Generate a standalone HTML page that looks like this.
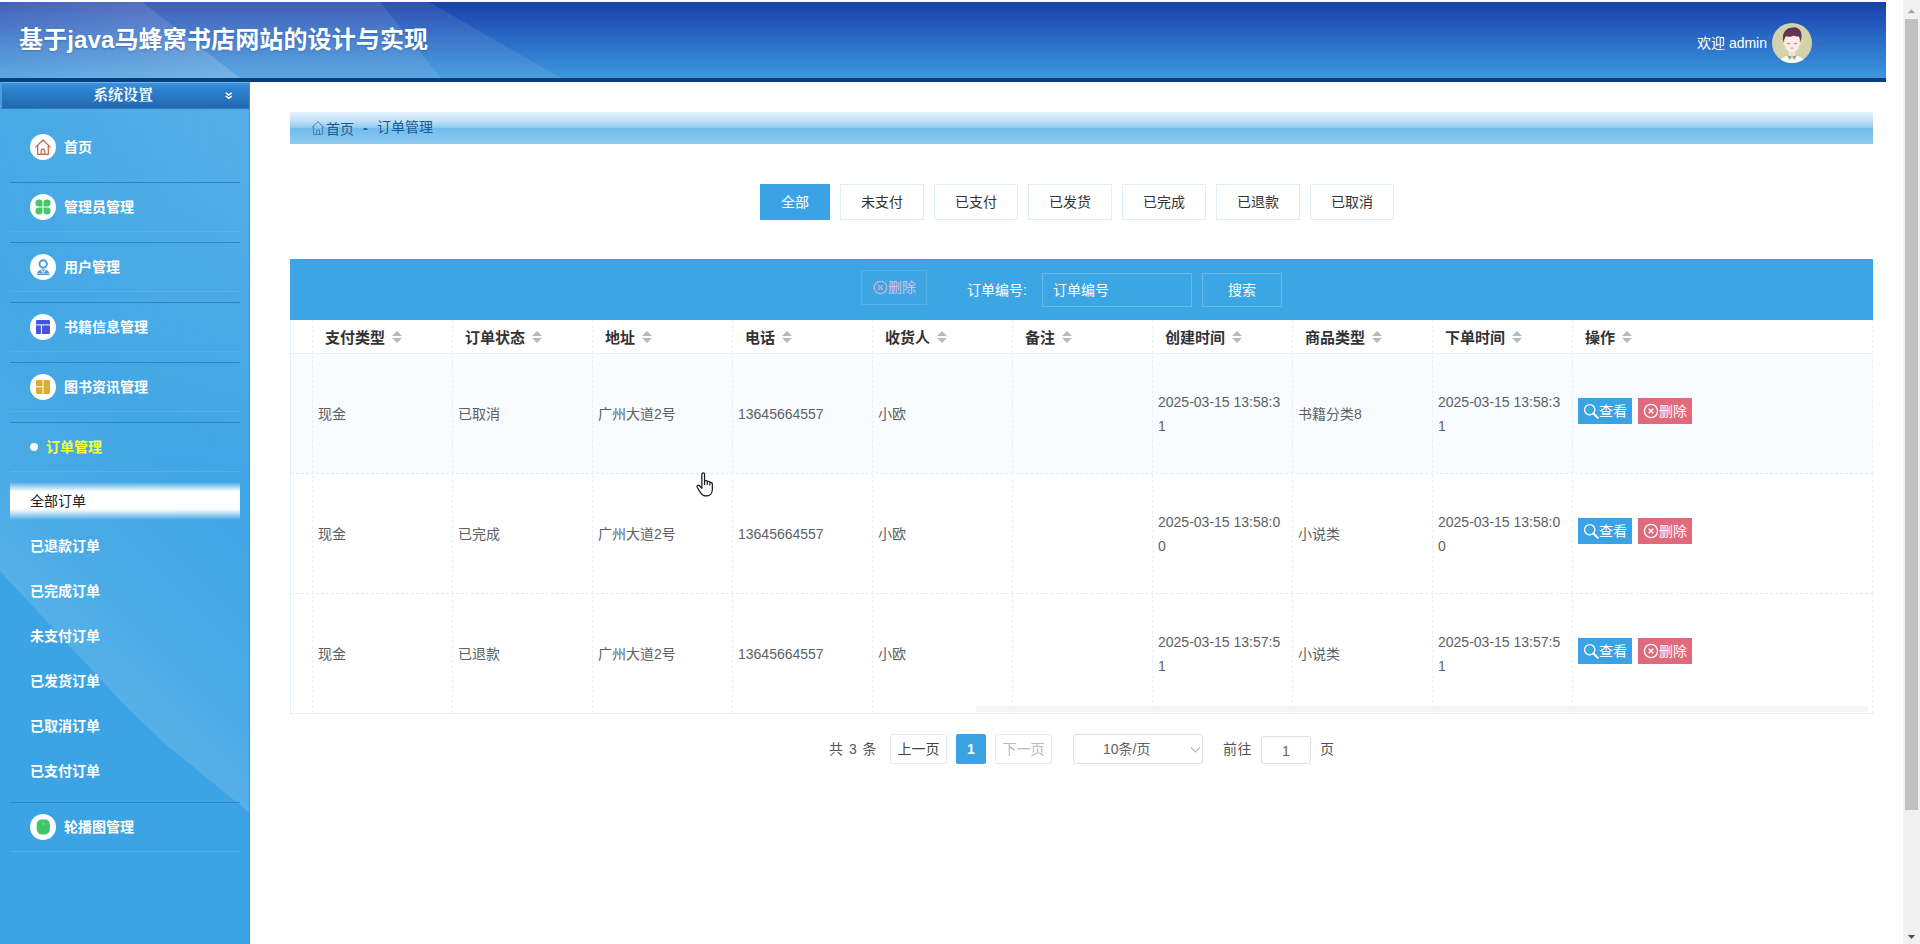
<!DOCTYPE html>
<html lang="zh-CN">
<head>
<meta charset="utf-8">
<title>基于java马蜂窝书店网站的设计与实现</title>
<style>
*{box-sizing:border-box;margin:0;padding:0}
html,body{width:1920px;height:944px;overflow:hidden;background:#fff}
body{position:relative;font-family:"Liberation Sans","Noto Sans CJK SC",sans-serif;font-size:14px;color:#333}
.abs{position:absolute}
/* ---------- header ---------- */
#header{position:absolute;left:0;top:2px;width:1886px;height:80px;border-bottom:4px solid #063f7f;overflow:hidden;
 background:linear-gradient(to bottom,#1b3fab 0%,#2a6cc6 50%,#3a97dc 100%)}
#header .beam{position:absolute;left:0;top:0;width:760px;height:76px}
#title{position:absolute;left:19px;top:21px;font-size:24px;font-weight:bold;color:#fff;line-height:34px;white-space:nowrap;letter-spacing:0.13px;text-shadow:0 1px 2px rgba(20,60,140,.35)}
#welcome{position:absolute;left:1697px;top:32px;font-size:14px;color:#fff;line-height:18px;white-space:nowrap}
#avatar{position:absolute;left:1772px;top:21px;width:40px;height:40px}
/* ---------- sidebar ---------- */
#side{position:absolute;left:0;top:82px;width:250px;height:862px;background:#3ca4e4;overflow:hidden;border-right:1px solid #3b94d2}
#side .beams{position:absolute;left:0;top:0;width:250px;height:863px}
#sys{position:absolute;left:0;top:0;width:250px;height:27px;background:linear-gradient(to bottom,#3a93d8 0%,#2b7fca 35%,#2267b1 100%);border-top:1px solid #6fb9ec;border-left:2px solid #4c9ddb;border-bottom:1px solid #2a78be;color:#fff;font-weight:bold;font-size:15px;line-height:25px;text-align:center;padding-right:6px;font-family:"Liberation Serif","Noto Serif CJK SC",serif}
.mi{position:absolute;left:10px;width:230px;height:60px;border-bottom:1px solid #2b86c9}
.mi.nb:before{display:none}
.mi:before{content:"";position:absolute;left:0;right:0;bottom:10px;height:1px;background:rgba(255,255,255,.09)}
.mi .ic{position:absolute;left:20px;top:11px;width:26px;height:26px;border-radius:50%;background:#fff}
.mi .ic svg{position:absolute;left:0;top:0;width:26px;height:26px}
.mi .tx{position:absolute;left:54px;top:13px;line-height:22px;font-size:14px;font-weight:bold;color:#fff;white-space:nowrap}
.sub{position:absolute;left:10px;width:230px;height:45px;line-height:45px;padding-left:20px;font-size:14px;font-weight:bold;color:#fff;white-space:nowrap}
/* ---------- main ---------- */
#crumb{position:absolute;left:290px;top:112px;width:1583px;height:32px;background:linear-gradient(to bottom,#e6f3fc 0%,#c6e3f8 25%,#94ccf2 48%,#74bcec 51%,#7cc1ee 70%,#8ecbf0 100%);color:#1b5a94;font-size:14px;line-height:32px;white-space:nowrap}
.tab{position:absolute;top:184px;height:36px;line-height:34px;border:1px solid #e0eef6;text-align:center;font-size:14px;color:#333;background:#fff}
.tab.on{background:#3ba3e3;border-color:#3ba3e3;color:#fff}
#tool{position:absolute;left:290px;top:259px;width:1583px;height:61px;background:#3ca5e4}
#tbl{position:absolute;left:290px;top:320px;width:1583px;height:394px;border-left:1px solid #e3eff6;border-bottom:1px solid #e9eff3}
.vl{position:absolute;top:0;width:0;height:393px;border-left:1px dashed #e9f0f5}
.hl{position:absolute;left:0;width:1582px;height:0;border-top:1px dashed #e2ebf1}
.th{position:absolute;top:0;height:33px;line-height:35px;font-weight:bold;font-size:15px;color:#333;white-space:nowrap}
.th i{display:inline-block;position:relative;width:10px;height:14px;margin-left:7px;vertical-align:-1px}
.th i:before,.th i:after{content:"";position:absolute;left:0;border:5px solid transparent}
.th i:before{top:-4px;border-bottom-color:#b5b9c1}
.th i:after{top:8px;border-top-color:#b5b9c1}
.td{position:absolute;font-size:14px;color:#5c5f64;line-height:24px;white-space:nowrap}
.btn{position:absolute;width:54px;height:26px;color:#fff;font-size:14px;line-height:26px;white-space:nowrap}
.btn.v{background:#3ba3e3}
.btn.d{background:#e0697b}
.btn svg{position:absolute;left:5px;top:5px;width:16px;height:16px}
.btn span{position:absolute;left:21px;top:0}
.pg{position:absolute;top:734px;height:30px;line-height:28px;font-size:14px;color:#555;white-space:nowrap}
.pg.b{border:1px solid #e6edf2;background:#fff;text-align:center;border-radius:2px}
</style>
</head>
<body>

<!-- HEADER -->
<div id="header">
  <svg class="beam" viewBox="0 0 760 76" preserveAspectRatio="none">
    <defs>
      <linearGradient id="hbA" x1="0" y1="0" x2="1" y2="0"><stop offset="0" stop-color="#fff" stop-opacity=".015"/><stop offset="1" stop-color="#fff" stop-opacity=".16"/></linearGradient>
    </defs>
    <polygon points="0,0 429,0 561,76 0,76" fill="#fff" fill-opacity=".085"/>
    <polygon points="0,0 380,0 441,76 0,76" fill="#fff" fill-opacity=".09"/>
    <polygon points="0,0 142,0 240,76 0,76" fill="url(#hbA)"/>
  </svg>
  <div id="title">基于java马蜂窝书店网站的设计与实现</div>
  <div id="welcome">欢迎 admin</div>
  <svg class="abs" style="left:1815px;top:38px;width:10px;height:7px" viewBox="0 0 10 7"><path d="M1 1.500l4 3.500 4-3.500" fill="none" stroke="#50648c" stroke-width="1.400" opacity=".5"/></svg>
  <svg id="avatar" viewBox="0 0 40 40">
    <defs><clipPath id="avc"><circle cx="20" cy="20" r="20"/></clipPath></defs>
    <circle cx="20" cy="20" r="20" fill="#d3d3ab"/>
    <g clip-path="url(#avc)">
      <path d="M7.500 40c.6-5 5.200-7.400 12.500-7.400S31.900 35 32.500 40z" fill="#fdfdfb"/>
      <path d="M16.800 28h6.400v4.600l-3.200 3.600-3.200-3.600z" fill="#f7ddd3"/>
      <path d="M15 32.200l2.300 4.300 2.700-2.800zM25 32.200l-2.300 4.300-2.700-2.800z" fill="#7aab70"/>
      <ellipse cx="12.600" cy="21" rx="1.300" ry="1.900" fill="#f7ddd3"/><ellipse cx="27.400" cy="21" rx="1.300" ry="1.900" fill="#f7ddd3"/>
      <path d="M12.700 17c0-6 3.200-8.500 7.300-8.500s7.300 2.500 7.300 8.500v4c0 4.600-3.300 8.300-7.300 8.300s-7.300-3.700-7.300-8.300z" fill="#fcebe4"/>
      <path d="M11.600 19.500C9.300 11.500 13 5 19.500 4.800c2-1 5.500-.6 7.300 1.200 3.400 2.400 3.300 8.400 1.700 13.200-.3-2.700-.8-4.400-1.700-5.800-1.700.4-3.600.2-5-.9-2.200 1.400-5.400 1.600-7.800.8-1.400 1.500-2 3.600-2.400 6.200z" fill="#623650"/>
      <path d="M15 20.400q1.400.9 2.800 0M22.200 20.400q1.400.9 2.800 0" fill="none" stroke="#6a4a55" stroke-width=".7"/>
      <path d="M18.600 24.900q1.400.9 2.800 0" fill="none" stroke="#d9737a" stroke-width=".8"/>
    </g>
  </svg>
</div>

<!-- SIDEBAR -->
<div id="side">
  <svg class="beams" viewBox="0 0 250 863" preserveAspectRatio="none">
    <defs>
      <linearGradient id="sb1" gradientUnits="userSpaceOnUse" x1="60" y1="549" x2="210" y2="399"><stop offset="0" stop-color="#fff" stop-opacity=".13"/><stop offset=".35" stop-color="#fff" stop-opacity=".07"/><stop offset="1" stop-color="#fff" stop-opacity=".02"/></linearGradient>
      <linearGradient id="sb2" x1="0" y1="0" x2="1" y2="0"><stop offset="0" stop-color="#fff" stop-opacity=".05"/><stop offset="1" stop-color="#fff" stop-opacity=".12"/></linearGradient>
      <linearGradient id="sb3" x1="0" y1="0" x2="0" y2="1"><stop offset="0" stop-color="#fff" stop-opacity="1"/><stop offset="1" stop-color="#fff" stop-opacity="0"/></linearGradient>
      <mask id="sbm"><rect x="0" y="0" width="250" height="420" fill="url(#sb3)"/></mask>
    </defs>
    <polygon points="0,0 250,0 250,731 164,661 121,619 0,489" fill="url(#sb1)"/>
    <rect x="0" y="0" width="250" height="420" fill="url(#sb2)" mask="url(#sbm)"/>
  </svg>
  <div id="sys">系统设置</div>
  <svg class="abs" style="left:224.500px;top:9.500px;width:7.500px;height:7.500px" viewBox="0 0 8 9" preserveAspectRatio="none"><path d="M0.800 0.800L4 3.600 7.200 0.800M0.800 4.800L4 7.600 7.200 4.800" fill="none" stroke="#fff" stroke-width="1.700"/></svg>

  <div class="mi nb" style="top:41px"><div class="ic"><svg viewBox="0 0 26 26"><path d="M5.700 13.100L13 6l7.300 7.100M7.700 11.800v8.500h10.600v-8.500M11.200 20.300v-3.300a1.800 1.800 0 0 1 3.600 0v3.300" fill="none" stroke="#c9604f" stroke-width="1.250" stroke-linejoin="round" stroke-linecap="round"/></svg></div><div class="tx">首页</div></div>

  <div class="mi" style="top:101px"><div class="ic"><svg viewBox="0 0 26 26"><g fill="#49c56a"><path transform="translate(12.5 12.5) scale(1 1)" d="M0 0H-3.700A3.300 3.300 0 0 1 -7 -3.300V-3.700A3.300 3.300 0 0 1 -3.700 -7H-3.300A3.300 3.300 0 0 1 0 -3.700Z"/><path transform="translate(13.5 12.5) scale(-1 1)" d="M0 0H-3.700A3.300 3.300 0 0 1 -7 -3.300V-3.700A3.300 3.300 0 0 1 -3.700 -7H-3.300A3.300 3.300 0 0 1 0 -3.700Z"/><path transform="translate(12.5 13.5) scale(1 -1)" d="M0 0H-3.700A3.300 3.300 0 0 1 -7 -3.300V-3.700A3.300 3.300 0 0 1 -3.700 -7H-3.300A3.300 3.300 0 0 1 0 -3.700Z"/><path transform="translate(13.5 13.5) scale(-1 -1)" d="M0 0H-3.700A3.300 3.300 0 0 1 -7 -3.300V-3.700A3.300 3.300 0 0 1 -3.700 -7H-3.300A3.300 3.300 0 0 1 0 -3.700Z"/></g></svg></div><div class="tx">管理员管理</div></div>

  <div class="mi" style="top:161px"><div class="ic"><svg viewBox="0 0 26 26"><circle cx="13.200" cy="10" r="3.700" fill="none" stroke="#4b98d8" stroke-width="1.900"/><path d="M6.800 21c.3-3.700 2.600-5.400 6.400-5.400s6.100 1.700 6.400 5.400z" fill="#4b98d8"/><path d="M11 16.300l2.200 2 2.200-2" fill="none" stroke="#fff" stroke-width="1.100"/><path d="M6.800 19.500h12.800" stroke="#fff" stroke-width=".6" opacity=".7"/></svg></div><div class="tx">用户管理</div></div>

  <div class="mi" style="top:221px"><div class="ic"><svg viewBox="0 0 26 26"><rect x="6" y="6" width="14" height="14" rx="1" fill="#4355d6"/><path d="M6 10.900h14M11.400 10.900v9.100" stroke="#fff" stroke-width="1"/></svg></div><div class="tx">书籍信息管理</div></div>

  <div class="mi" style="top:281px"><div class="ic"><svg viewBox="0 0 26 26"><rect x="6" y="6" width="14" height="14" rx="1" fill="#dcae2b"/><path d="M13 6v14M6 12.700h7" stroke="#fff" stroke-width="1"/></svg></div><div class="tx">图书资讯管理</div></div>

  <div class="abs" style="left:10px;top:389px;width:230px;height:1px;background:rgba(255,255,255,.10)"></div>
  <div class="mi nb" style="top:341px;height:50px;border-bottom:none"><div class="abs" style="left:20px;top:20px;width:8px;height:8px;border-radius:50%;background:#fff"></div><div class="tx" style="left:36px;color:#f5ff3c">订单管理</div></div>

  <div class="sub" style="top:400px;height:38px;line-height:38px;color:#222;font-weight:normal;background:linear-gradient(to bottom,rgba(255,255,255,0) 0%,rgba(255,255,255,.45) 11%,rgba(255,255,255,.97) 24%,#fff 30%,#fff 68%,rgba(255,255,255,.95) 73%,rgba(255,255,255,.5) 86%,rgba(255,255,255,0) 100%)">全部订单</div>
  <div class="sub" style="top:442px">已退款订单</div>
  <div class="sub" style="top:487px">已完成订单</div>
  <div class="sub" style="top:532px">未支付订单</div>
  <div class="sub" style="top:577px">已发货订单</div>
  <div class="sub" style="top:622px">已取消订单</div>
  <div class="sub" style="top:667px">已支付订单</div>
  <div class="abs" style="left:10px;top:720px;width:230px;height:1px;background:#2b86c9"></div>

  <div class="mi nb" style="top:721px;height:49px;border-bottom:1px solid rgba(255,255,255,.12)"><div class="ic" style="top:11px"><svg viewBox="0 0 26 26"><rect x="6.700" y="5.600" width="13.200" height="14.800" rx="4.800" fill="#42c568"/><path d="M13.300 8.600v2.200" stroke="#a5e6b8" stroke-width="1"/></svg></div><div class="tx" style="top:13px">轮播图管理</div></div>
</div>

<!-- MAIN -->
<div id="crumb">
  <svg class="abs" style="left:21px;top:9px;width:14px;height:14px" viewBox="0 0 14 14"><path d="M0.800 6.600L7 0.800l6.200 5.800M2.500 5.500v7.900h9V5.500M5.500 13.400V9.300h3v4.100" fill="none" stroke="#4a7fae" stroke-width="1" stroke-linejoin="round"/></svg>
  <span class="abs" style="left:36px;top:1px">首页</span>
  <span class="abs" style="left:73px;top:0;font-weight:bold">-</span>
  <span class="abs" style="left:87px;top:-1px">订单管理</span>
</div>

<div class="tab on" style="left:760px;width:70px">全部</div>
<div class="tab" style="left:840px;width:84px">未支付</div>
<div class="tab" style="left:934px;width:84px">已支付</div>
<div class="tab" style="left:1028px;width:84px">已发货</div>
<div class="tab" style="left:1122px;width:84px">已完成</div>
<div class="tab" style="left:1216px;width:84px">已退款</div>
<div class="tab" style="left:1310px;width:84px">已取消</div>

<div id="tool">
  <div class="abs" style="left:571px;top:11px;width:66px;height:35px;border:1px solid rgba(255,255,255,.13);background:rgba(255,255,255,.02);color:#cdc3e6;line-height:32px;white-space:nowrap">
    <svg class="abs" style="left:11px;top:9px;width:15px;height:15px" viewBox="0 0 15 15"><circle cx="7.500" cy="7.500" r="6.300" fill="none" stroke="#d7b9d8" stroke-width="1.100"/><path d="M5.200 5.200l4.600 4.600M9.800 5.200l-4.600 4.600" stroke="#d7b9d8" stroke-width="1.100"/></svg>
    <span class="abs" style="left:26px;top:0">删除</span>
  </div>
  <span class="abs" style="left:677px;top:14px;line-height:34px;color:#fff;white-space:nowrap">订单编号:</span>
  <div class="abs" style="left:752px;top:14px;width:150px;height:34px;border:1px solid rgba(255,255,255,.22);color:#fff;line-height:32px;padding-left:10px;white-space:nowrap">订单编号</div>
  <div class="abs" style="left:912px;top:14px;width:80px;height:34px;border:1px solid rgba(255,255,255,.22);color:#fff;line-height:32px;text-align:center;white-space:nowrap">搜索</div>
</div>


<div id="tbl">
  <div class="abs" style="left:0;top:33px;width:1582px;height:120px;background:#f8fcfe"></div>
  <div class="vl" style="left:21px"></div>
  <div class="vl" style="left:161px"></div>
  <div class="vl" style="left:301px"></div>
  <div class="vl" style="left:441px"></div>
  <div class="vl" style="left:581px"></div>
  <div class="vl" style="left:721px"></div>
  <div class="vl" style="left:861px"></div>
  <div class="vl" style="left:1001px"></div>
  <div class="vl" style="left:1141px"></div>
  <div class="vl" style="left:1281px"></div>
  <div class="vl" style="left:1581px"></div>
  <div class="abs" style="left:0;top:33px;width:1582px;height:1px;background:#e6f0f6"></div>
  <div class="hl" style="top:153px"></div>
  <div class="hl" style="top:273px"></div>
  <div class="th" style="left:34px">支付类型<i></i></div>
  <div class="th" style="left:174px">订单状态<i></i></div>
  <div class="th" style="left:314px">地址<i></i></div>
  <div class="th" style="left:454px">电话<i></i></div>
  <div class="th" style="left:594px">收货人<i></i></div>
  <div class="th" style="left:734px">备注<i></i></div>
  <div class="th" style="left:874px">创建时间<i></i></div>
  <div class="th" style="left:1014px">商品类型<i></i></div>
  <div class="th" style="left:1154px">下单时间<i></i></div>
  <div class="th" style="left:1294px">操作<i></i></div>
  <div class="td" style="left:27px;top:82px">现金</div>
  <div class="td" style="left:167px;top:82px">已取消</div>
  <div class="td" style="left:307px;top:82px">广州大道2号</div>
  <div class="td" style="left:447px;top:82px">13645664557</div>
  <div class="td" style="left:587px;top:82px">小欧</div>
  <div class="td" style="left:867px;top:70px">2025-03-15 13:58:3<br>1</div>
  <div class="td" style="left:1147px;top:70px">2025-03-15 13:58:3<br>1</div>
  <div class="td" style="left:1007px;top:82px">书籍分类8</div>
  <div class="btn v" style="left:1287px;top:78px"><svg viewBox="0 0 15 15"><circle cx="6.300" cy="6.300" r="4.800" fill="none" stroke="#fff" stroke-width="1.300"/><path d="M9.800 9.800l4 4" stroke="#fff" stroke-width="1.900" stroke-linecap="round"/></svg><span>查看</span></div>
  <div class="btn d" style="left:1347px;top:78px"><svg viewBox="0 0 15 15"><circle cx="7.500" cy="7.500" r="6.200" fill="none" stroke="#fff" stroke-width="1.300"/><path d="M5.300 5.300l4.400 4.400M9.700 5.300l-4.400 4.400" stroke="#fff" stroke-width="1.300"/></svg><span>删除</span></div>
  <div class="td" style="left:27px;top:202px">现金</div>
  <div class="td" style="left:167px;top:202px">已完成</div>
  <div class="td" style="left:307px;top:202px">广州大道2号</div>
  <div class="td" style="left:447px;top:202px">13645664557</div>
  <div class="td" style="left:587px;top:202px">小欧</div>
  <div class="td" style="left:867px;top:190px">2025-03-15 13:58:0<br>0</div>
  <div class="td" style="left:1147px;top:190px">2025-03-15 13:58:0<br>0</div>
  <div class="td" style="left:1007px;top:202px">小说类</div>
  <div class="btn v" style="left:1287px;top:198px"><svg viewBox="0 0 15 15"><circle cx="6.300" cy="6.300" r="4.800" fill="none" stroke="#fff" stroke-width="1.300"/><path d="M9.800 9.800l4 4" stroke="#fff" stroke-width="1.900" stroke-linecap="round"/></svg><span>查看</span></div>
  <div class="btn d" style="left:1347px;top:198px"><svg viewBox="0 0 15 15"><circle cx="7.500" cy="7.500" r="6.200" fill="none" stroke="#fff" stroke-width="1.300"/><path d="M5.300 5.300l4.400 4.400M9.700 5.300l-4.400 4.400" stroke="#fff" stroke-width="1.300"/></svg><span>删除</span></div>
  <div class="td" style="left:27px;top:322px">现金</div>
  <div class="td" style="left:167px;top:322px">已退款</div>
  <div class="td" style="left:307px;top:322px">广州大道2号</div>
  <div class="td" style="left:447px;top:322px">13645664557</div>
  <div class="td" style="left:587px;top:322px">小欧</div>
  <div class="td" style="left:867px;top:310px">2025-03-15 13:57:5<br>1</div>
  <div class="td" style="left:1147px;top:310px">2025-03-15 13:57:5<br>1</div>
  <div class="td" style="left:1007px;top:322px">小说类</div>
  <div class="btn v" style="left:1287px;top:318px"><svg viewBox="0 0 15 15"><circle cx="6.300" cy="6.300" r="4.800" fill="none" stroke="#fff" stroke-width="1.300"/><path d="M9.800 9.800l4 4" stroke="#fff" stroke-width="1.900" stroke-linecap="round"/></svg><span>查看</span></div>
  <div class="btn d" style="left:1347px;top:318px"><svg viewBox="0 0 15 15"><circle cx="7.500" cy="7.500" r="6.200" fill="none" stroke="#fff" stroke-width="1.300"/><path d="M5.300 5.300l4.400 4.400M9.700 5.300l-4.400 4.400" stroke="#fff" stroke-width="1.300"/></svg><span>删除</span></div>
  <div class="abs" style="left:685px;top:385.500px;width:892px;height:6.500px;background:#f5f5f5;border-radius:2px"></div>
</div>

<div class="pg" style="left:829px;word-spacing:2px;line-height:30px">共 3 条</div>
<div class="pg b" style="left:890px;width:57px;color:#444">上一页</div>
<div class="pg" style="left:956px;width:30px;height:30px;top:734px;line-height:30px;background:#3ba3e3;color:#fff;font-weight:bold;text-align:center;border-radius:2px">1</div>
<div class="pg b" style="left:995px;width:57px;color:#b4b8bf">下一页</div>
<div class="pg b" style="left:1073px;width:130px;border-color:#dcdfe6;border-radius:3px;color:#606266;text-align:left;padding-left:29px">10条/页
  <svg class="abs" style="left:116px;top:11px;width:11px;height:8px" viewBox="0 0 11 8"><path d="M1 1.500l4.500 4.500 4.500-4.500" fill="none" stroke="#b9bcc3" stroke-width="1.200"/></svg>
</div>
<div class="pg" style="left:1223px;line-height:30px;letter-spacing:.5px">前往</div>
<div class="pg b" style="left:1261px;width:50px;top:736px;height:28px;line-height:28px;border-color:#dcdfe6;border-radius:3px;color:#606266">1</div>
<div class="pg" style="left:1320px;line-height:30px">页</div>

<!-- mouse cursor -->
<svg class="abs" style="left:695px;top:471.500px;width:21px;height:27px" viewBox="0 0 20 26"><path d="M6.500 2.200c0-1.700 2.600-1.700 2.600 0v6.600c1-.9 2.500-.6 2.600.6 1-.7 2.400-.3 2.500.8 1.200-.5 2.400.1 2.400 1.500v4.800c0 3.700-2.200 6.600-6 6.600-3 0-4.400-1.500-5.900-4L2 14.700c-.9-1.500 1-2.800 2.200-1.500l2.300 2.500z" fill="#fff" stroke="#1b1b1f" stroke-width="1.200" stroke-linejoin="round"/><path d="M9.100 9v3.500M11.700 9.600v3M14.200 10.600v2.400" stroke="#1b1b1f" stroke-width="1.100" fill="none"/></svg>

<!-- browser scrollbar -->
<div class="abs" style="left:1903px;top:0;width:17px;height:944px;background:#f1f1f1"></div>
<div class="abs" style="left:1905px;top:19px;width:13px;height:791px;background:#c1c1c1"></div>
<svg class="abs" style="left:1903px;top:0;width:17px;height:17px" viewBox="0 0 17 17"><path d="M4.800 13.300l3.700-4 3.700 4z" fill="#a3a3a3"/></svg>
<svg class="abs" style="left:1903px;top:927px;width:17px;height:17px" viewBox="0 0 17 17"><path d="M4.800 8l3.700 4 3.700-4z" fill="#505050"/></svg>

</body>
</html>
